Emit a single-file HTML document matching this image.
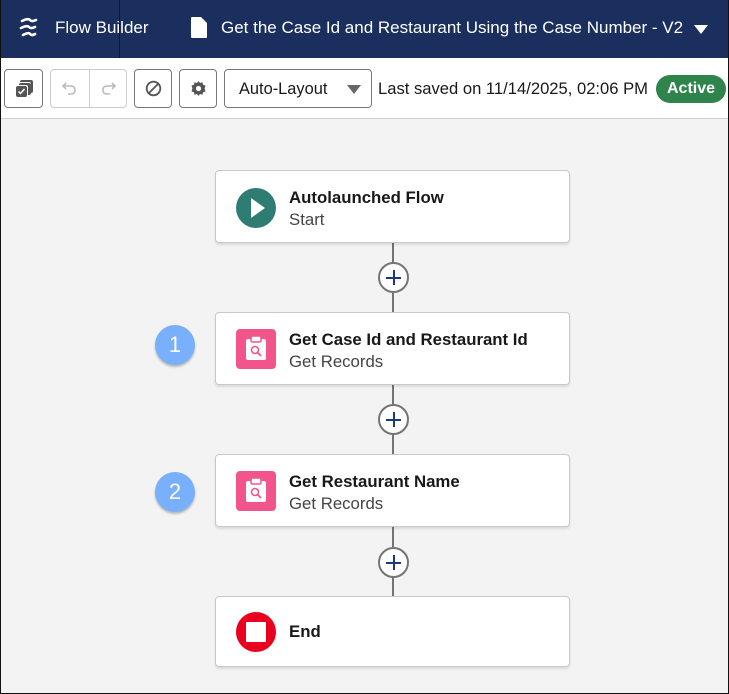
<!DOCTYPE html>
<html><head><meta charset="utf-8"><style>
*{box-sizing:border-box;margin:0;padding:0}
body{width:729px;height:694px;overflow:hidden;font-family:"Liberation Sans",Arial,sans-serif;background:#f3f3f3;position:relative}
.frame{position:absolute;left:0;top:0;width:729px;height:694px;border:1px solid #111;border-top:none;pointer-events:none;z-index:10}
.hdr{position:absolute;left:0;top:0;width:729px;height:58px;background:#1a2f5e;color:#fff;font-size:17px}
.hdr .div{position:absolute;left:119px;top:0;width:1px;height:58px;background:#0b1a3a}
.tb{position:absolute;left:0;top:58px;width:729px;height:61px;background:#fff;border-bottom:1px solid #d0d0d0}
.btn{position:absolute;top:11px;height:39px;border:1px solid #777;border-radius:4px;background:#fff}
.abs{position:absolute}
.line{position:absolute;left:392px;width:2px;background:#747474}
.card{position:absolute;left:215px;width:355px;background:#fff;border:1px solid #c9c9c9;border-radius:4px;box-shadow:0 2px 2px rgba(0,0,0,.1)}
.card .t{position:absolute;left:73px;font-weight:bold;font-size:16.8px;color:#181818}
.card .s{position:absolute;left:73px;font-size:16.8px;color:#444}
.plus{position:absolute;left:378px;width:31px;height:31px;border-radius:50%;background:#fff;border:2px solid #747474}
.plus:before{content:"";position:absolute;left:6px;top:12.5px;width:15px;height:2px;background:#1b3a7a}
.plus:after{content:"";position:absolute;left:12.5px;top:6px;width:2px;height:15px;background:#1b3a7a}
.badge{position:absolute;left:155px;width:40px;height:40px;border-radius:50%;background:#78b0fd;color:#fff;font-size:22px;text-align:center;line-height:40px;box-shadow:0 2px 2px rgba(0,0,0,.25)}
.gr{position:absolute;left:20px;top:20px;width:40px;height:40px;border-radius:4px;background:#f2558c}
</style></head><body>
<div class="hdr">
 <svg class="abs" style="left:18px;top:17px" width="22" height="24" viewBox="0 0 22 24"><path d="M4 4 Q10 1 12 3 Q14 5 18 3 M3 11 Q9 8 11 10 Q13 12 17 10 M5 18 Q11 15 12 17 Q14 19 17 17" stroke="#fff" stroke-width="2.6" fill="none" stroke-linecap="round"/></svg>
 <div class="abs" style="left:55px;top:18px">Flow Builder</div>
 <div class="div"></div>
 <svg class="abs" style="left:191px;top:17px" width="16" height="21" viewBox="0 0 16 21"><path d="M0 1 Q0 0 1 0 H10 L16 6 V20 Q16 21 15 21 H1 Q0 21 0 20Z" fill="#fff"/></svg>
 <div class="abs" style="left:221px;top:18px">Get the Case Id and Restaurant Using the Case Number - V2</div>
 <svg class="abs" style="left:694px;top:25px" width="14" height="9"><path d="M0 0H14L7 9Z" fill="#fff"/></svg>
</div>
<div class="tb">
 <div class="btn" style="left:4px;width:39px"><svg style="position:absolute;left:10px;top:10px" width="18" height="18" viewBox="0 0 18 18"><rect x="5" y="0" width="13" height="13" rx="2" fill="#555"/><rect x="3" y="2" width="13" height="13" rx="2" fill="#fff"/><rect x="4" y="3" width="12" height="12" rx="2" fill="#555"/><rect x="0" y="5" width="13" height="13" rx="2" fill="#fff"/><rect x="1" y="6" width="11" height="11" rx="2" fill="#555"/><path d="M3.5 11.5 L5.5 13.5 L9.5 9" stroke="#fff" stroke-width="1.5" fill="none"/></svg></div>
 <div class="btn" style="left:50px;width:77px;border-color:#ccc"><div class="abs" style="left:38px;top:0;width:1px;height:37px;background:#ccc"></div>
  <svg class="abs" style="left:11px;top:11px" width="16" height="16" viewBox="0 0 16 16"><path d="M4 2 L1 5 L4 8 M1 5 H9 Q13 5 13 9 Q13 13 9 13 H6" stroke="#bbb" stroke-width="1.6" fill="none"/></svg>
  <svg class="abs" style="left:49px;top:11px" width="16" height="16" viewBox="0 0 16 16"><path d="M12 2 L15 5 L12 8 M15 5 H7 Q3 5 3 9 Q3 13 7 13 H10" stroke="#bbb" stroke-width="1.6" fill="none"/></svg></div>
 <div class="btn" style="left:134px;width:38px"><svg class="abs" style="left:10px;top:10px" width="17" height="17" viewBox="0 0 17 17"><circle cx="8.5" cy="8.5" r="6.8" stroke="#555" stroke-width="1.8" fill="none"/><path d="M4 13 L13 4" stroke="#555" stroke-width="1.8"/></svg></div>
 <div class="btn" style="left:179px;width:38px"><svg class="abs" style="left:10px;top:10px" width="17" height="17" viewBox="0 0 17 17"><path d="M8.5 1 L10 3 L12.5 2.3 L13 4.8 L15.5 5.5 L14.6 8.5 L15.5 11.5 L13 12.2 L12.5 14.7 L10 14 L8.5 16 L7 14 L4.5 14.7 L4 12.2 L1.5 11.5 L2.4 8.5 L1.5 5.5 L4 4.8 L4.5 2.3 L7 3Z" fill="#555"/><circle cx="8.5" cy="8.5" r="2.6" fill="#fff"/></svg></div>
 <div class="btn" style="left:224px;width:148px"><div class="abs" style="left:14px;top:10px;font-size:16.4px;color:#181818">Auto-Layout</div><svg class="abs" style="left:122px;top:15px" width="14" height="9"><path d="M0 0H14L7 9Z" fill="#666"/></svg></div>
 <div class="abs" style="left:378px;top:21px;font-size:16.6px;color:#181818">Last saved on 11/14/2025, 02:06 PM</div>
 <div class="abs" style="left:656px;top:17px;width:70px;height:28px;border-radius:14px;background:#2e844a;color:#fff;font-weight:bold;font-size:16px;text-align:center;line-height:28px">Active</div>
</div>
<div class="line" style="top:243px;height:353px"></div>
<div class="card" style="top:170px;height:73px"><svg class="abs" style="left:20px;top:17px" width="40" height="40"><circle cx="20" cy="20" r="20" fill="#2e7d72"/><path d="M15 10 L29 20 L15 30Z" fill="#fff"/></svg><div class="t" style="top:17px">Autolaunched Flow</div><div class="s" style="top:39px">Start</div></div>
<div class="plus" style="top:262px"></div>
<div class="badge" style="top:325px">1</div>
<div class="card" style="top:312px;height:73px"><div class="gr" style="top:16px"><svg class="abs" style="left:8px;top:7px" width="24" height="26" viewBox="0 0 24 26"><rect x="2" y="3" width="20" height="21" rx="2" fill="#fff"/><rect x="7" y="0" width="10" height="6" rx="1.5" fill="#fff" stroke="#f2558c" stroke-width="1.5"/><circle cx="11" cy="14" r="3.5" stroke="#f2558c" stroke-width="1.6" fill="none"/><path d="M13.5 16.5 L17 20" stroke="#f2558c" stroke-width="1.8"/></svg></div><div class="t" style="top:17px">Get Case Id and Restaurant Id</div><div class="s" style="top:39px">Get Records</div></div>
<div class="plus" style="top:404px"></div>
<div class="badge" style="top:472px">2</div>
<div class="card" style="top:454px;height:73px"><div class="gr" style="top:16px"><svg class="abs" style="left:8px;top:7px" width="24" height="26" viewBox="0 0 24 26"><rect x="2" y="3" width="20" height="21" rx="2" fill="#fff"/><rect x="7" y="0" width="10" height="6" rx="1.5" fill="#fff" stroke="#f2558c" stroke-width="1.5"/><circle cx="11" cy="14" r="3.5" stroke="#f2558c" stroke-width="1.6" fill="none"/><path d="M13.5 16.5 L17 20" stroke="#f2558c" stroke-width="1.8"/></svg></div><div class="t" style="top:17px">Get Restaurant Name</div><div class="s" style="top:39px">Get Records</div></div>
<div class="plus" style="top:547px"></div>
<div class="card" style="top:596px;height:71px"><svg class="abs" style="left:20px;top:15px" width="40" height="40"><circle cx="20" cy="20" r="20" fill="#ea001e"/><rect x="10" y="10" width="20" height="20" fill="#fff"/></svg><div class="t" style="top:25px">End</div></div>
<div class="frame"></div>
</body></html>
